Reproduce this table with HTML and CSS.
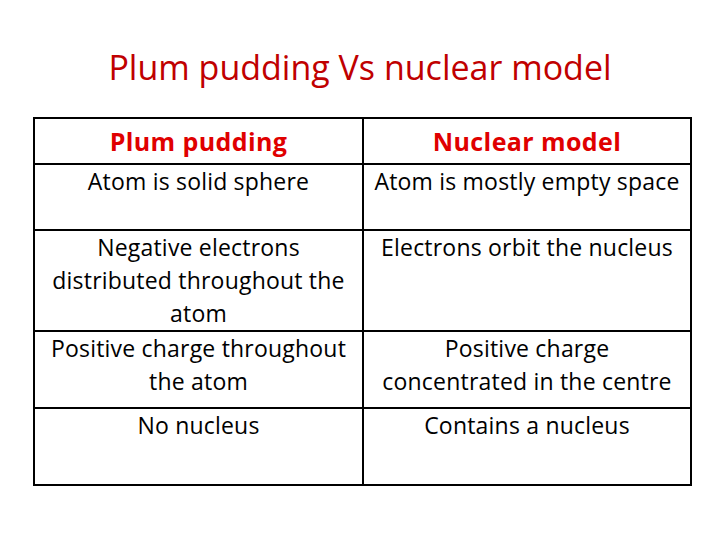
FILE: index.html
```html
<!DOCTYPE html>
<html>
<head>
<meta charset="utf-8">
<link rel="stylesheet" href="styles.css">
</head>
<body>
<div class="slide">
  <h1 class="title">Plum pudding Vs nuclear model</h1>
  <table class="compare">
    <colgroup>
      <col class="c-left">
      <col class="c-right">
    </colgroup>
    <tr class="r-head">
      <th>Plum pudding</th>
      <th>Nuclear model</th>
    </tr>
    <tr class="r1">
      <td>Atom is solid sphere</td>
      <td>Atom is mostly empty space</td>
    </tr>
    <tr class="r2">
      <td>Negative electrons<br>distributed throughout the<br>atom</td>
      <td>Electrons orbit the nucleus</td>
    </tr>
    <tr class="r3">
      <td>Positive charge throughout<br>the atom</td>
      <td>Positive charge<br>concentrated in the centre</td>
    </tr>
    <tr class="r4">
      <td>No nucleus</td>
      <td>Contains a nucleus</td>
    </tr>
  </table>
</div>
</body>
</html>
```
FILE: styles.css
```css
html, body {
  margin: 0;
  padding: 0;
  background: #ffffff;
}
.slide {
  width: 720px;
  height: 540px;
  padding-top: 44px;
  box-sizing: border-box;
  font-family: "Comic Sans MS", "Open Sans", sans-serif;
}
.title {
  margin: 0;
  text-align: center;
  color: #c00000;
  font-size: 34px;
  font-weight: normal;
  line-height: 46px;
}
.compare {
  margin: 27px 0 0 33px;
  border-collapse: collapse;
  width: 657px;
  table-layout: fixed;
}
.c-left { width: 329px; }
.c-right { width: 328px; }
.compare th, .compare td {
  border: 2px solid #000;
  text-align: center;
  vertical-align: top;
  padding: 0;
  font-size: 23px;
  letter-spacing: 0.2px;
  line-height: 33px;
  color: #000;
  font-weight: normal;
  white-space: nowrap;
}
.compare th {
  color: #e00000;
  font-weight: bold;
  font-size: 25px;
  letter-spacing: 0.4px;
  line-height: 42px;
  vertical-align: middle;
}
.r-head { height: 46px; }
.r1 { height: 66px; }
.r2 { height: 99px; }
.r3 { height: 77px; }
.r4 { height: 77px; }
```
